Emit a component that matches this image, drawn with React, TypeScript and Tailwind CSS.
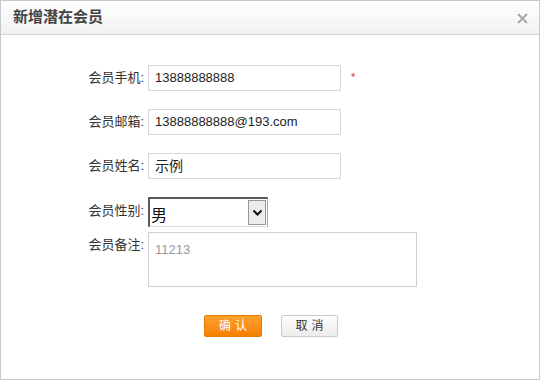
import React from "react";

const font = { fontFamily: '"Liberation Sans", Arial, "Noto Sans CJK SC", sans-serif' };

function Row({ label, children, className = "", labelClass = "" }: { label: string; children: React.ReactNode; className?: string; labelClass?: string }) {
  return (
    <div className={"flex items-center " + className}>
      <div className={"w-[147px] shrink-0 pr-[4px] text-right text-[13px] text-[#333] " + labelClass}>{label}</div>
      {children}
    </div>
  );
}

export default function App() {
  return (
    <div style={font} className="w-[540px] h-[380px] bg-white border border-[#c8c8c8] flex flex-col overflow-hidden">
      <div className="h-[34px] shrink-0 flex items-center justify-between pl-[12px] pr-[10px] border-b border-[#d4d4d4] bg-gradient-to-b from-white to-[#f1f1f1]">
        <span className="text-[15px] font-semibold text-[#444]">新增潜在会员</span>
        <svg width="13" height="13" viewBox="0 0 13 13" className="mt-[1px]">
          <path d="M2 2 L11 11 M11 2 L2 11" stroke="#a6a6a6" strokeWidth="1.8" />
        </svg>
      </div>
      <div className="flex flex-col pt-[30px]">
        <Row label="会员手机:">
          <div className="w-[193px] h-[26px] border border-[#d8d8d8] flex items-center pl-[6px] text-[13px] text-[#222]">13888888888</div>
          <span className="ml-[10px] text-[11px] text-[#e23] mt-[-2px]">*</span>
        </Row>
        <Row label="会员邮箱:" className="mt-[18px]">
          <div className="w-[193px] h-[26px] border border-[#d8d8d8] flex items-center pl-[6px] text-[13px] text-[#222]">13888888888@193.com</div>
        </Row>
        <Row label="会员姓名:" className="mt-[18px]">
          <div className="w-[193px] h-[26px] border border-[#d8d8d8] flex items-center pl-[6px] text-[14px] text-[#222]">示例</div>
        </Row>
        <Row label="会员性别:" className="mt-[18px]" labelClass="mt-[-2px]">
          <div className="w-[120px] h-[30px] border-t-2 border-l-2 border-[#5a5a5a] border-r border-b border-r-[#aaa] border-b-[#ddd] flex items-stretch">
            <div className="flex-1 flex items-end pl-[1px] text-[16px] leading-[20px] text-[#111]">男</div>
            <div className="w-[18px] my-[1px] mr-[1px] border border-[#999] bg-[#ececec] flex items-center justify-center">
              <svg width="11" height="8" viewBox="0 0 11 8">
                <path d="M1.5 1.5 L5.5 5.5 L9.5 1.5" stroke="#111" strokeWidth="2" fill="none" />
              </svg>
            </div>
          </div>
        </Row>
        <Row label="会员备注:" className="mt-[5px] !items-start" labelClass="pt-[3px]">
          <div className="w-[269px] h-[55px] border border-[#cfcfcf] pl-[6px] pt-[7px] text-[13px] text-[#999]">11213</div>
        </Row>
        <div className="flex mt-[28px] pl-[203px] gap-[19px]">
          <div className="w-[58px] h-[22px] rounded-[2px] border border-[#e87a00] bg-gradient-to-b from-[#ffa12a] to-[#f57f00] flex items-center justify-center text-[12px] text-white tracking-[4px] pl-[4px]">确认</div>
          <div className="w-[57px] h-[22px] rounded-[2px] border border-[#c9c9c9] bg-gradient-to-b from-white to-[#ececec] flex items-center justify-center text-[12px] text-[#333] tracking-[4px] pl-[4px]">取消</div>
        </div>
      </div>
    </div>
  );
}
